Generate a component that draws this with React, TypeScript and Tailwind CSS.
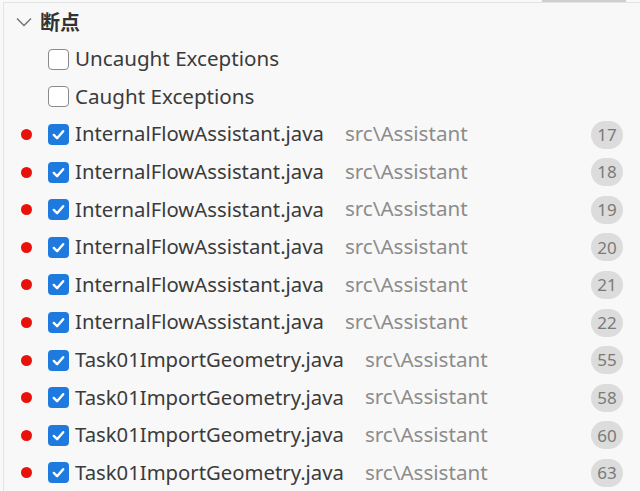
interface Bp {
  file: string;
  line: number;
}

const breakpoints: Bp[] = [
  { file: 'InternalFlowAssistant.java', line: 17 },
  { file: 'InternalFlowAssistant.java', line: 18 },
  { file: 'InternalFlowAssistant.java', line: 19 },
  { file: 'InternalFlowAssistant.java', line: 20 },
  { file: 'InternalFlowAssistant.java', line: 21 },
  { file: 'InternalFlowAssistant.java', line: 22 },
  { file: 'Task01ImportGeometry.java', line: 55 },
  { file: 'Task01ImportGeometry.java', line: 58 },
  { file: 'Task01ImportGeometry.java', line: 60 },
  { file: 'Task01ImportGeometry.java', line: 63 },
];

function Box({ checked }: { checked: boolean }) {
  if (!checked) {
    return <span className="w-[21px] h-[21px] rounded-[4px] border-[1.5px] border-[#8a8a8a] bg-white flex-shrink-0" />;
  }
  return (
    <span className="w-[21px] h-[21px] rounded-[4px] bg-[#1f7ae0] flex items-center justify-center flex-shrink-0">
      <svg width="15" height="15" viewBox="0 0 16 16" fill="none" stroke="white" strokeWidth="2.6" strokeLinecap="round" strokeLinejoin="round">
        <polyline points="3 8.5 6.5 12 13 4.5" />
      </svg>
    </span>
  );
}

export default function App() {
  return (
    <div
      className="w-[640px] h-[491px] overflow-hidden bg-[#f8f8f8] relative text-[#3b3b3b]"
      style={{ fontFamily: '"Noto Sans", "Noto Sans CJK SC", sans-serif' }}
    >
      {/* scrollbar thumb */}
      <div className="absolute left-[542px] top-0 w-[84px] h-[2px] bg-[#cfcfcf]" />
      <div className="h-[2px]" />
      <div className="border-t border-[#e4e4e4] border-l ml-[3px] h-full">
        {/* section header */}
        <div className="h-[37.6px] flex items-center pl-[12px] gap-[8px]">
          <svg width="16" height="10" viewBox="0 0 16 10" fill="none" stroke="#707070" strokeWidth="1.3">
            <polyline points="1 1.5 8 8.5 15 1.5" />
          </svg>
          <span className="text-[20px] font-bold text-[#333]" style={{ fontFamily: '"Noto Sans CJK SC", sans-serif' }}>断点</span>
        </div>

        {['Uncaught Exceptions', 'Caught Exceptions'].map((label) => (
          <div key={label} className="h-[37.6px] flex items-center pl-[44px] gap-[6px]">
            <Box checked={false} />
            <span className="text-[20.6px] leading-none -mt-[2px]">{label}</span>
          </div>
        ))}

        {breakpoints.map((bp) => (
          <div key={bp.line} className="h-[37.6px] flex items-center pl-[17px] pr-[17px]">
            <span className="w-[11px] h-[11px] rounded-full bg-[#e8120a] mr-[16px] flex-shrink-0" />
            <Box checked />
            <span className="text-[20.3px] leading-none ml-[6px] -mt-[2px]">{bp.file}</span>
            <span className="text-[20.6px] leading-none ml-[21px] -mt-[2px] text-[#8c8c8c]">src\Assistant</span>
            <span className="ml-auto h-[28px] min-w-[32px] px-[6px] rounded-full bg-[#dcdcdc] text-[#7a7a7a] text-[17px] flex items-center justify-center">
              {bp.line}
            </span>
          </div>
        ))}
      </div>
    </div>
  );
}
